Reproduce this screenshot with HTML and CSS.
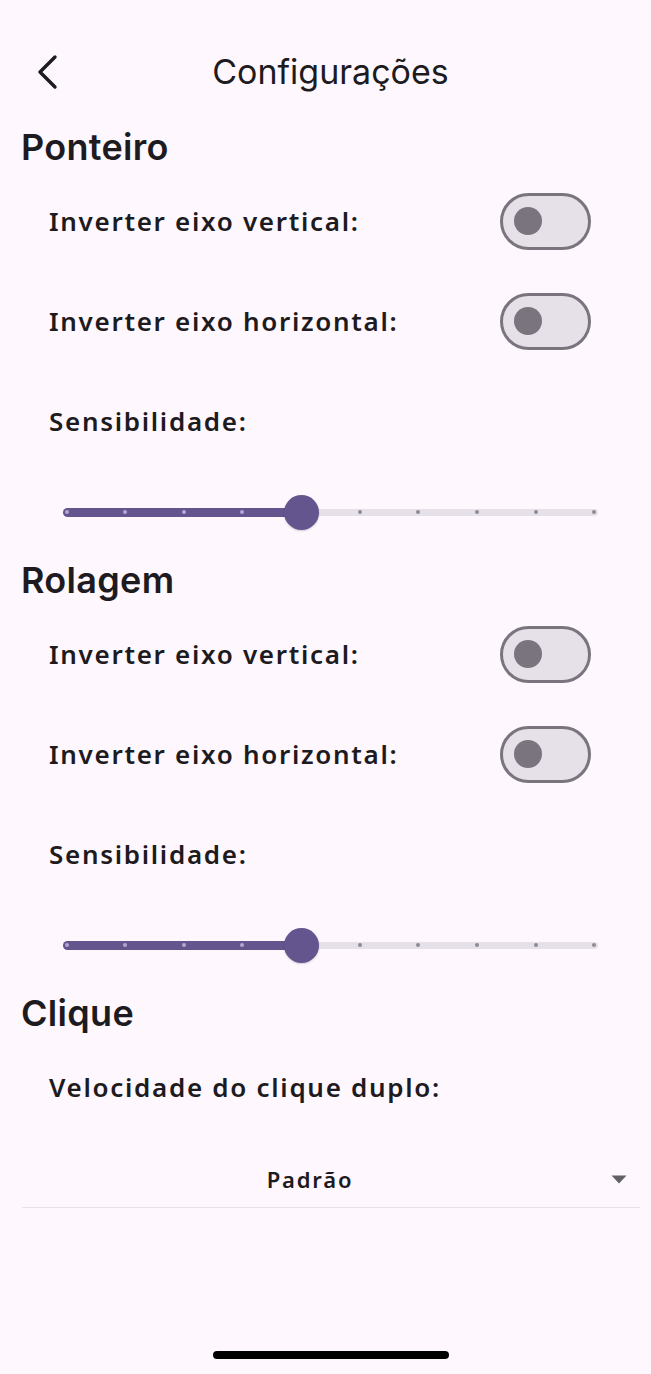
FILE: index.html
```html
<!DOCTYPE html>
<html lang="pt-BR">
<head>
<meta charset="utf-8">
<title>Configurações</title>
<link rel="stylesheet" href="styles.css">
</head>
<body>
<div class="page">
  <header class="appbar">
    <div class="back">
      <svg width="22" height="36" viewBox="0 0 22 36" aria-hidden="true">
        <polyline points="18,3 3,18 18,33" fill="none" stroke="#1d1b20" stroke-width="3.4" stroke-linecap="round" stroke-linejoin="round"/>
      </svg>
    </div>
    <h1 class="title">Configurações</h1>
    <div></div>
  </header>

  <h2 class="section">Ponteiro</h2>
  <div class="row"><span class="label">Inverter eixo vertical:</span><span class="switch"><span class="knob"></span></span></div>
  <div class="row"><span class="label">Inverter eixo horizontal:</span><span class="switch"><span class="knob"></span></span></div>
  <div class="row"><span class="label">Sensibilidade:</span></div>
  <div class="slider">
    <div class="track">
      <div class="track-inactive"></div>
      <div class="track-active" style="width:238px"></div>
      <div class="ticks">
        <span class="tick on"></span><span class="tick on"></span><span class="tick on"></span><span class="tick on"></span><span class="tick on"></span>
        <span class="tick"></span><span class="tick"></span><span class="tick"></span><span class="tick"></span><span class="tick"></span>
      </div>
      <div class="thumb" style="left:238px"></div>
    </div>
  </div>

  <h2 class="section">Rolagem</h2>
  <div class="row"><span class="label">Inverter eixo vertical:</span><span class="switch"><span class="knob"></span></span></div>
  <div class="row"><span class="label">Inverter eixo horizontal:</span><span class="switch"><span class="knob"></span></span></div>
  <div class="row"><span class="label">Sensibilidade:</span></div>
  <div class="slider">
    <div class="track">
      <div class="track-inactive"></div>
      <div class="track-active" style="width:238px"></div>
      <div class="ticks">
        <span class="tick on"></span><span class="tick on"></span><span class="tick on"></span><span class="tick on"></span><span class="tick on"></span>
        <span class="tick"></span><span class="tick"></span><span class="tick"></span><span class="tick"></span><span class="tick"></span>
      </div>
      <div class="thumb" style="left:238px"></div>
    </div>
  </div>

  <h2 class="section">Clique</h2>
  <div class="row"><span class="label">Velocidade do clique duplo:</span></div>
  <div class="dropdown">
    <span class="dd-value">Padrão</span>
    <span class="dd-icon">
      <svg width="16" height="9" viewBox="0 0 16 9" aria-hidden="true"><polygon points="0.5,0.5 15.5,0.5 8,8.5" fill="#626065"/></svg>
    </span>
  </div>

  <div class="home-indicator"></div>
</div>
</body>
</html>
```

FILE: styles.css
```css
* { box-sizing: border-box; }

html, body {
  margin: 0;
  padding: 0;
  background: #fef7fe;
}

.page {
  width: 651px;
  height: 1374px;
  display: flex;
  flex-direction: column;
  color: #1d1b20;
  font-family: "Noto Sans", Roboto, "Liberation Sans", sans-serif;
  overflow: hidden;
}

.appbar {
  height: 120px;
  padding-top: 24px;
  display: grid;
  grid-template-columns: 1fr auto 1fr;
  align-items: center;
}

.back {
  padding-left: 37px;
  display: flex;
  align-items: center;
}

.back svg { display: block; }

.title {
  margin: 0 0 0 10px;
  font-family: Inter, "Liberation Sans", sans-serif;
  font-weight: 400;
  font-size: 34px;
  line-height: 48px;
  letter-spacing: 0;
}

.section {
  margin: 3px 0 0 0;
  padding-left: 21px;
  font-family: Inter, "Liberation Sans", sans-serif;
  font-weight: 600;
  font-size: 36px;
  line-height: 48px;
  letter-spacing: 0.3px;
}

.row {
  height: 100px;
  display: flex;
  align-items: center;
  justify-content: space-between;
  padding: 0 60px 0 49px;
}

.label {
  font-family: "Noto Sans", Roboto, "Liberation Sans", sans-serif;
  font-weight: 600;
  font-size: 26px;
  letter-spacing: 1.7px;
  line-height: 40px;
}

.switch {
  width: 91px;
  height: 57px;
  border: 3.5px solid #79747e;
  border-radius: 29px;
  background: #e6e0e9;
  display: flex;
  align-items: center;
  padding-left: 10.5px;
}

.knob {
  width: 28px;
  height: 28px;
  border-radius: 50%;
  background: #79747e;
}

.slider {
  height: 82px;
  display: flex;
  align-items: center;
  padding: 0 53px 0 63px;
}

.track {
  position: relative;
  flex: 1;
  height: 9px;
}

.track-inactive {
  position: absolute;
  left: 0;
  right: 0;
  top: 1px;
  height: 7px;
  border-radius: 4px;
  background: #e6e0e9;
}

.track-active {
  position: absolute;
  left: 0;
  top: 0;
  height: 9px;
  border-radius: 5px;
  background: #65558f;
}

.ticks {
  position: absolute;
  inset: 0;
  display: flex;
  justify-content: space-between;
  align-items: center;
  padding: 0 1.5px;
}

.tick {
  width: 4px;
  height: 4px;
  border-radius: 50%;
  background: #8f8b94;
}

.tick.on { background: #b3a7d1; }

.thumb {
  position: absolute;
  top: 50%;
  width: 35px;
  height: 35px;
  margin: -17.5px 0 0 -17.5px;
  border-radius: 50%;
  background: #65558f;
  box-shadow: 0 1px 2px rgba(0, 0, 0, 0.18);
}

.dropdown {
  margin: 0 11px 0 22px;
  height: 71px;
  padding-top: 14px;
  display: flex;
  align-items: center;
  border-bottom: 1px solid #e8e2e9;
}

.dd-value {
  flex: 1;
  text-align: center;
  font-family: "Noto Sans", Roboto, "Liberation Sans", sans-serif;
  font-weight: 600;
  font-size: 22px;
  letter-spacing: 1.8px;
  line-height: 30px;
}

.dd-icon {
  width: 42px;
  display: flex;
  justify-content: center;
  align-items: center;
}

.dd-icon svg { display: block; }

.home-indicator {
  margin: auto 0 15px 213px;
  width: 236px;
  height: 8px;
  border-radius: 4px;
  background: #000;
}
```
